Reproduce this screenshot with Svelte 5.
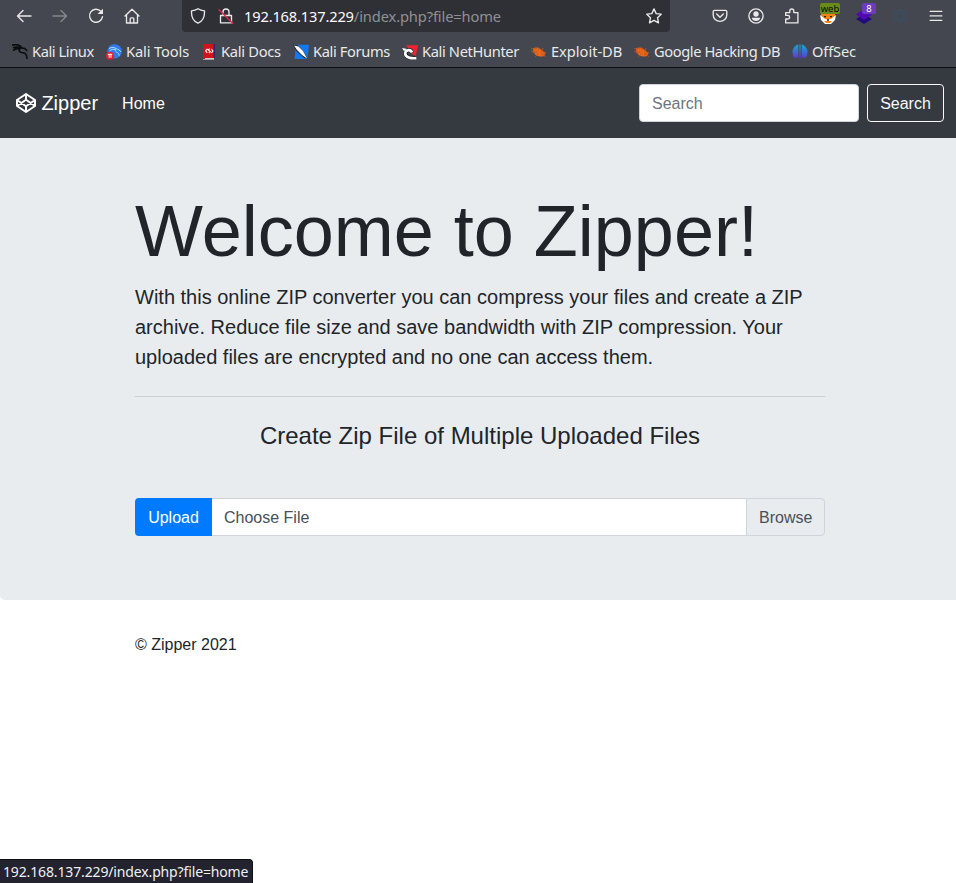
<script>
  const bookmarks = [
    { icon: 'dragon', label: 'Kali Linux', w: 62, ls: -0.42 },
    { icon: 'tools', label: 'Kali Tools', w: 63, ls: -0.12 },
    { icon: 'docs', label: 'Kali Docs', w: 60, ls: -0.28 },
    { icon: 'forums', label: 'Kali Forums', w: 77, ls: -0.36 },
    { icon: 'hunter', label: 'Kali NetHunter', w: 97, ls: -0.36 },
    { icon: 'bug', label: 'Exploit-DB', w: 71, ls: -0.03 },
    { icon: 'bug', label: 'Google Hacking DB', w: 126, ls: -0.41 },
    { icon: 'offsec', label: 'OffSec', w: 44, ls: -0.15 }
  ];
</script>

<div class="window">
  <header class="chrome">
    <div class="toolbar">
      <div class="nav-buttons">
        <svg class="i" viewBox="0 0 16 16"><path d="M15 8H2M7 2.5L1.5 8L7 13.5" /></svg>
        <svg class="i dim" viewBox="0 0 16 16"><path d="M1 8h13M9 2.5L14.5 8L9 13.5" /></svg>
        <svg class="i" viewBox="0 0 16 16"><path d="M13 3.5A6.5 6.5 0 1 0 14.5 8.6" /><path class="fill" d="M15 .8V6H9.5z" /></svg>
        <svg class="i" viewBox="0 0 16 16"><path d="M1 8L8 1.3L15 8M2.5 7v8h11V7M6.2 15v-4.2q0-1 1-1h1.6q1 0 1 1V15" /></svg>
      </div>
      <div class="urlbar">
        <svg class="i" viewBox="0 0 16 16"><path d="M8 .8C6 2.2 3.7 2.7 1.5 2.8C1.2 8.7 3 13.2 8 15.2C13 13.2 14.8 8.7 14.5 2.8C12.3 2.7 10 2.2 8 .8z" /></svg>
        <svg class="i lock" viewBox="0 0 16 16"><path d="M2.5 7.5h11v7.3h-11zM5 7V4a3 3 0 0 1 6 0v3" /><path class="slash" d="M1 1.8L14.7 15.3" /></svg>
        <span class="url"><b>192.168.137.229</b>/index.php?file=home</span>
        <svg class="i star" viewBox="0 0 16 16"><path d="M8 .9L10.2 5.6L15.2 6.2L11.5 9.7L12.5 14.9L8 12.3L3.5 14.9L4.5 9.7L.8 6.2L5.8 5.6z" /></svg>
      </div>
      <div class="actions">
        <svg class="i" viewBox="0 0 16 16"><path d="M2.5 2.3h11q1.3 0 1.3 1.3V7a6.8 6.4 0 0 1-13.6 0V3.6q0-1.3 1.3-1.3zM4.7 6L8 9.2L11.3 6" /></svg>
        <svg class="i" viewBox="0 0 16 16"><circle cx="8" cy="8" r="7.1" /><circle class="fill" cx="8" cy="6" r="2.7" /><path class="fill" d="M3.8 9.8h8.4Q11.5 13 8 13T3.8 9.8z" /></svg>
        <svg class="i" viewBox="0 0 16 16"><path d="M1.7 14.9V11h2.1a1.7 1.7 0 0 0 0-3.6H1.7V4.6h4.1V3a2 2 0 0 1 4 0v1.6h4.1v10.3z" /></svg>
        <span class="ext">
          <svg viewBox="0 0 16 16"><path fill="#f58113" d="M1 2l4 3h6l4-3v7l-3 5-4 1-4-1-3-5z" /><path fill="#fff" d="M0 7l4 3 4-1 4 1 4-3-1 5-4 4H5l-4-4z" /><path fill="#f58113" d="M3.5 5.5l4.5 3 4.5-3-.5 5-3 1H7l-3-1zM4 13h8l-2 2H6z" /><path fill="#222" d="M4 8h2v1.3H4zM10 8h2v1.3h-2zM7 11.3h2v1.4H7z" /></svg>
          <span class="badge web">web</span>
        </span>
        <span class="ext">
          <svg viewBox="0 0 16 16"><path fill="#210b7e" d="M0 11l8-5 8 5-8 5z" /><path fill="#5208b5" d="M0 6.5L8 1l8 5.5L8 12z" /></svg>
          <span class="badge eight">8</span>
        </span>
        <svg class="i faint" viewBox="0 0 16 16"><path d="M8 1l6 3.5v7L8 15l-6-3.5v-7zM8 4l3.5 2v4L8 12l-3.5-2V6zM8 1v3M2 4.5L4.5 6M14 4.5L11.5 6M8 12v3M2 11.5L4.5 10M14 11.5L11.5 10" /></svg>
        <svg class="i" viewBox="0 0 16 16"><path d="M2.2 3.4h11.6M2.2 7.9h11.6M2.2 12.4h11.6" /></svg>
      </div>
    </div>
    <nav class="bookmarks">
      {#each bookmarks as b}
        <span class="bookmark">
          <svg viewBox="0 0 16 16">
            {#if b.icon === 'dragon'}
              <path class="dragon" d="M0 1.2C4 0 8 1 10 4M1 4c3-1.6 6-1 9 0M1 6.7C3 4.5 6 4 9 4.6M8 4c-2 3 0 4.5 3 4.7c3 .2 4 3 4 6.3M9.8 4l3 .5l2.4 2.5" />
            {:else if b.icon === 'tools'}
              <circle cx="8.6" cy="7.4" r="7.2" fill="#2d7cf0" />
              <path d="M3 4.5c3-1.5 5-1.3 7 0c1.8 1 4 1.5 5 3.5M3.5 7c2-1.8 4-2 6-1.4c-1 3 3.7 2.3 3.7 6" stroke="#b9dcff" stroke-width="1" fill="none" />
              <circle cx="4" cy="11.7" r="4" fill="#e3202f" />
              <path d="M1.8 10.3h4.4M3.2 10.3v3.4M5 10.3v3.4" stroke="#fff" stroke-width="1" />
            {:else if b.icon === 'docs'}
              <path fill="#202a78" d="M2 0h12v14H2z" /><path fill="#d3131b" d="M3.2 0h9.4v14H3.2z" /><path fill="#d8c8c9" d="M2 14h11v1.7H2z" /><path fill="#d3131b" d="M2 0h2v15H2z" />
              <path d="M6.4 4.8L4.6 6.8L6.2 8.8M10.4 5L12 7L10.4 9M9 4.6L7.2 5.8L9.4 7.8L7.8 9.2" stroke="#fff" stroke-width="1.1" fill="none" />
            {:else if b.icon === 'forums'}
              <path fill="#1678ee" d="M3 .7h13L14.6 15H1.5z" /><path fill="#20232a" d="M0 1l5 .3 5.5 6L15 15l-3.7-1L3.3 7z" /><path fill="#fff" d="M1 1.5l4.5 1L10 7l4.3 7.7L9 11 4 6z" />
            {:else if b.icon === 'hunter'}
              <path fill="#ee2530" d="M4 1.2h12L13.4 14 9 8z" /><path d="M13.7 13.6C8 14.5 4 13 3.7 9.8C3.5 5.8 8.8 4.4 9.9 8.7" stroke="#20232a" stroke-width="4" fill="none" /><path d="M14.3 14.2C8.8 14.6 3.2 13.4 3.2 9.6C3.2 5.9 8.4 4.6 10 8.5" stroke="#fff" stroke-width="2.6" fill="none" /><path fill="#fff" d="M0 4l5 1-3 2z" />
            {:else if b.icon === 'bug'}
              <path fill="#ec6518" d="M2 4.5C5 2.6 9 4 11 6.5L14.5 9 13 12Q9 13.4 5.5 11.5T2 4.5z" /><path d="M0 4.7h6M1.5 9l5-1M4 12.7L7 10M7 2.7L8 6M12 4l-1.3 4M15 8.5l-5 1M15 12.5L10 10M0 7l4 1" stroke="#b95825" stroke-width=".8" />
            {:else}
              <defs><linearGradient id="og" x2="0" y2="1"><stop stop-color="#15a9cf" /><stop offset="1" stop-color="#6330d5" /></linearGradient></defs>
              <path fill="url(#og)" d="M4.7.9L6.3.6V13L3 14.3Q.4 12 .4 8T4.7.9zM7.4.5h1.2v15H7.4zM9.7.6l1.6.3Q15.6 4 15.6 8T13 14.3L9.7 13z" />
            {/if}
          </svg>
          <span class="label" style="width:{b.w}px;letter-spacing:{b.ls}px">{b.label}</span>
        </span>
      {/each}
    </nav>
  </header>

  <nav class="navbar">
    <a class="brand" href="#top">
      <svg viewBox="0 0 20 20"><path d="M10 1l9 6v6l-9 6-9-6V7zM10 1v5.7M10 13.3V19M1 7l9 6.3L19 7M1 13l9-6.3 9 6.3" /></svg>
      Zipper
    </a>
    <a class="home" href="#home">Home</a>
    <form>
      <input placeholder="Search" aria-label="Search" />
      <button type="button">Search</button>
    </form>
  </nav>

  <main class="jumbotron">
    <div class="container">
      <h1>Welcome to Zipper!</h1>
      <p>With this online ZIP converter you can compress your files and create a ZIP archive. Reduce file size and save bandwidth with ZIP compression. Your uploaded files are encrypted and no one can access them.</p>
      <hr />
      <h4>Create Zip File of Multiple Uploaded Files</h4>
      <div class="upload">
        <button type="button">Upload</button>
        <span class="file">Choose File</span>
        <span class="browse">Browse</span>
      </div>
    </div>
  </main>
  <footer class="container">© Zipper 2021</footer>
  <div class="status"><span>192.168.137.229/index.php?file=home</span></div>
</div>

<style>
  :global(body) { margin: 0; }
  .window, .window * { box-sizing: border-box; }
  .window {
    position: relative; width: 956px; height: 883px; overflow: hidden; background: #fff;
    color: #212529; font: 16px/1.5 "Liberation Sans", Arial, sans-serif;
  }
  .chrome {
    height: 68px; background: #44474f; border-bottom: 1px solid #0d0e11; color: #e9e9ea;
    font: 14.67px/20px "Noto Sans", "Open Sans", sans-serif;
  }
  .toolbar { display: flex; height: 32px; }
  .i { width: 16px; height: 16px; flex: none; fill: none; stroke: #e9e9ea; stroke-width: 1.35; stroke-linejoin: round; stroke-linecap: round; }
  .fill { fill: #e9e9ea; stroke: none; }
  .dim { opacity: .4; }
  .faint { stroke: #3a4e60; stroke-width: 1.3; }
  .nav-buttons { display: flex; gap: 20px; width: 182px; padding: 8px 0 0 16px; }
  .urlbar { display: flex; align-items: center; width: 488px; padding: 0 8px; background: #2f3036; border-radius: 0 0 4px 4px; }
  .lock { margin-left: 12px; }
  .slash { stroke: #e22850; }
  .url { margin-left: 10px; color: #8f9095; white-space: nowrap; letter-spacing: -.12px; }
  .url b { font-weight: 400; color: #fbfbfe; letter-spacing: -.17px; }
  .star { margin-left: auto; }
  .actions { display: flex; gap: 20px; padding: 8px 0 0 42px; }
  .ext { position: relative; width: 16px; height: 16px; }
  .ext svg { display: block; width: 16px; height: 16px; }
  .badge { position: absolute; top: -5px; height: 11px; border-radius: 2px; font-size: 9.5px; line-height: 11px; text-align: center; }
  .web { left: 0; width: 20px; background: #688c17; color: #080b02; }
  .eight { left: 6px; width: 14px; background: #6c3bc0; color: #fff; }
  .bookmarks { display: flex; gap: 12px; padding: 10px 12px 0; }
  .bookmark { display: flex; align-items: center; gap: 4px; height: 20px; }
  .bookmark svg { width: 16px; height: 16px; flex: none; }
  .dragon { fill: none; stroke: #0b0c0e; stroke-width: 1.6; }
  .label { flex: none; white-space: nowrap; padding-bottom: 2px; }

  .navbar { display: flex; align-items: center; height: 70px; padding: 0 12px 0 16px; background: #353a41; }
  .navbar a { color: #fff; text-decoration: none; }
  .brand { display: flex; align-items: center; gap: 5.4px; font-size: 20px; line-height: 30px; }
  .brand svg { width: 20px; height: 20px; fill: none; stroke: #fff; stroke-width: 2; stroke-linejoin: round; }
  .navbar .home { margin-left: 24px; padding-top: 2px; }
  form { display: flex; gap: 8px; margin-left: auto; }
  input { width: 220px; height: 38px; padding: 8px 12px 6px; border: 1px solid #ced4da; border-radius: 4px; font: inherit; }
  input::placeholder { color: #6c757d; opacity: 1; }
  form button { width: 77px; height: 38px; padding: 2px 0 0; border: 1px solid #f8f9fa; border-radius: 4px; background: none; color: #f8f9fa; font: inherit; }

  .jumbotron { height: 462px; padding-top: 50px; background: #e8ecef; border-radius: 0 0 0 4.8px; }
  .container { width: 690px; margin: 0 0 0 135px; }
  h1 { margin: 0 0 8px; font-size: 72px; font-weight: 300; line-height: 86px; }
  p { margin: 0; font-size: 20px; font-weight: 300; line-height: 30px; }
  hr { margin: 24px 0; border: 0; border-top: 1px solid #ccd0d3; }
  h4 { margin: 0; font-size: 24px; font-weight: 400; line-height: 29px; text-align: center; }
  .upload { display: flex; height: 38px; margin-top: 48px; line-height: 38px; color: #495057; }
  .upload button { width: 77px; padding: 1px 0 0; border: 0; border-radius: 4px 0 0 4px; background: #007bff; color: #fff; font: inherit; line-height: 37px; }
  .file { flex: 1; padding-left: 12px; border: 1px solid #ced4da; border-width: 1px 0; background: #fff; }
  .browse { width: 79px; padding-left: 12px; border: 1px solid #ced4da; border-radius: 0 4px 4px 0; background: #e8ecef; }
  footer { padding-top: 33px; }
  .status {
    position: absolute; left: 0; bottom: 0; width: 253px; height: 24px; padding-left: 3px; background: #22232e;
    border: solid #0f1015; border-width: 1px 1px 0 0; border-radius: 0 4px 0 0; color: #f0f0f2;
    font: 14px/24px "Noto Sans", "Open Sans", sans-serif; letter-spacing: -.14px; white-space: nowrap;
  }
</style>
